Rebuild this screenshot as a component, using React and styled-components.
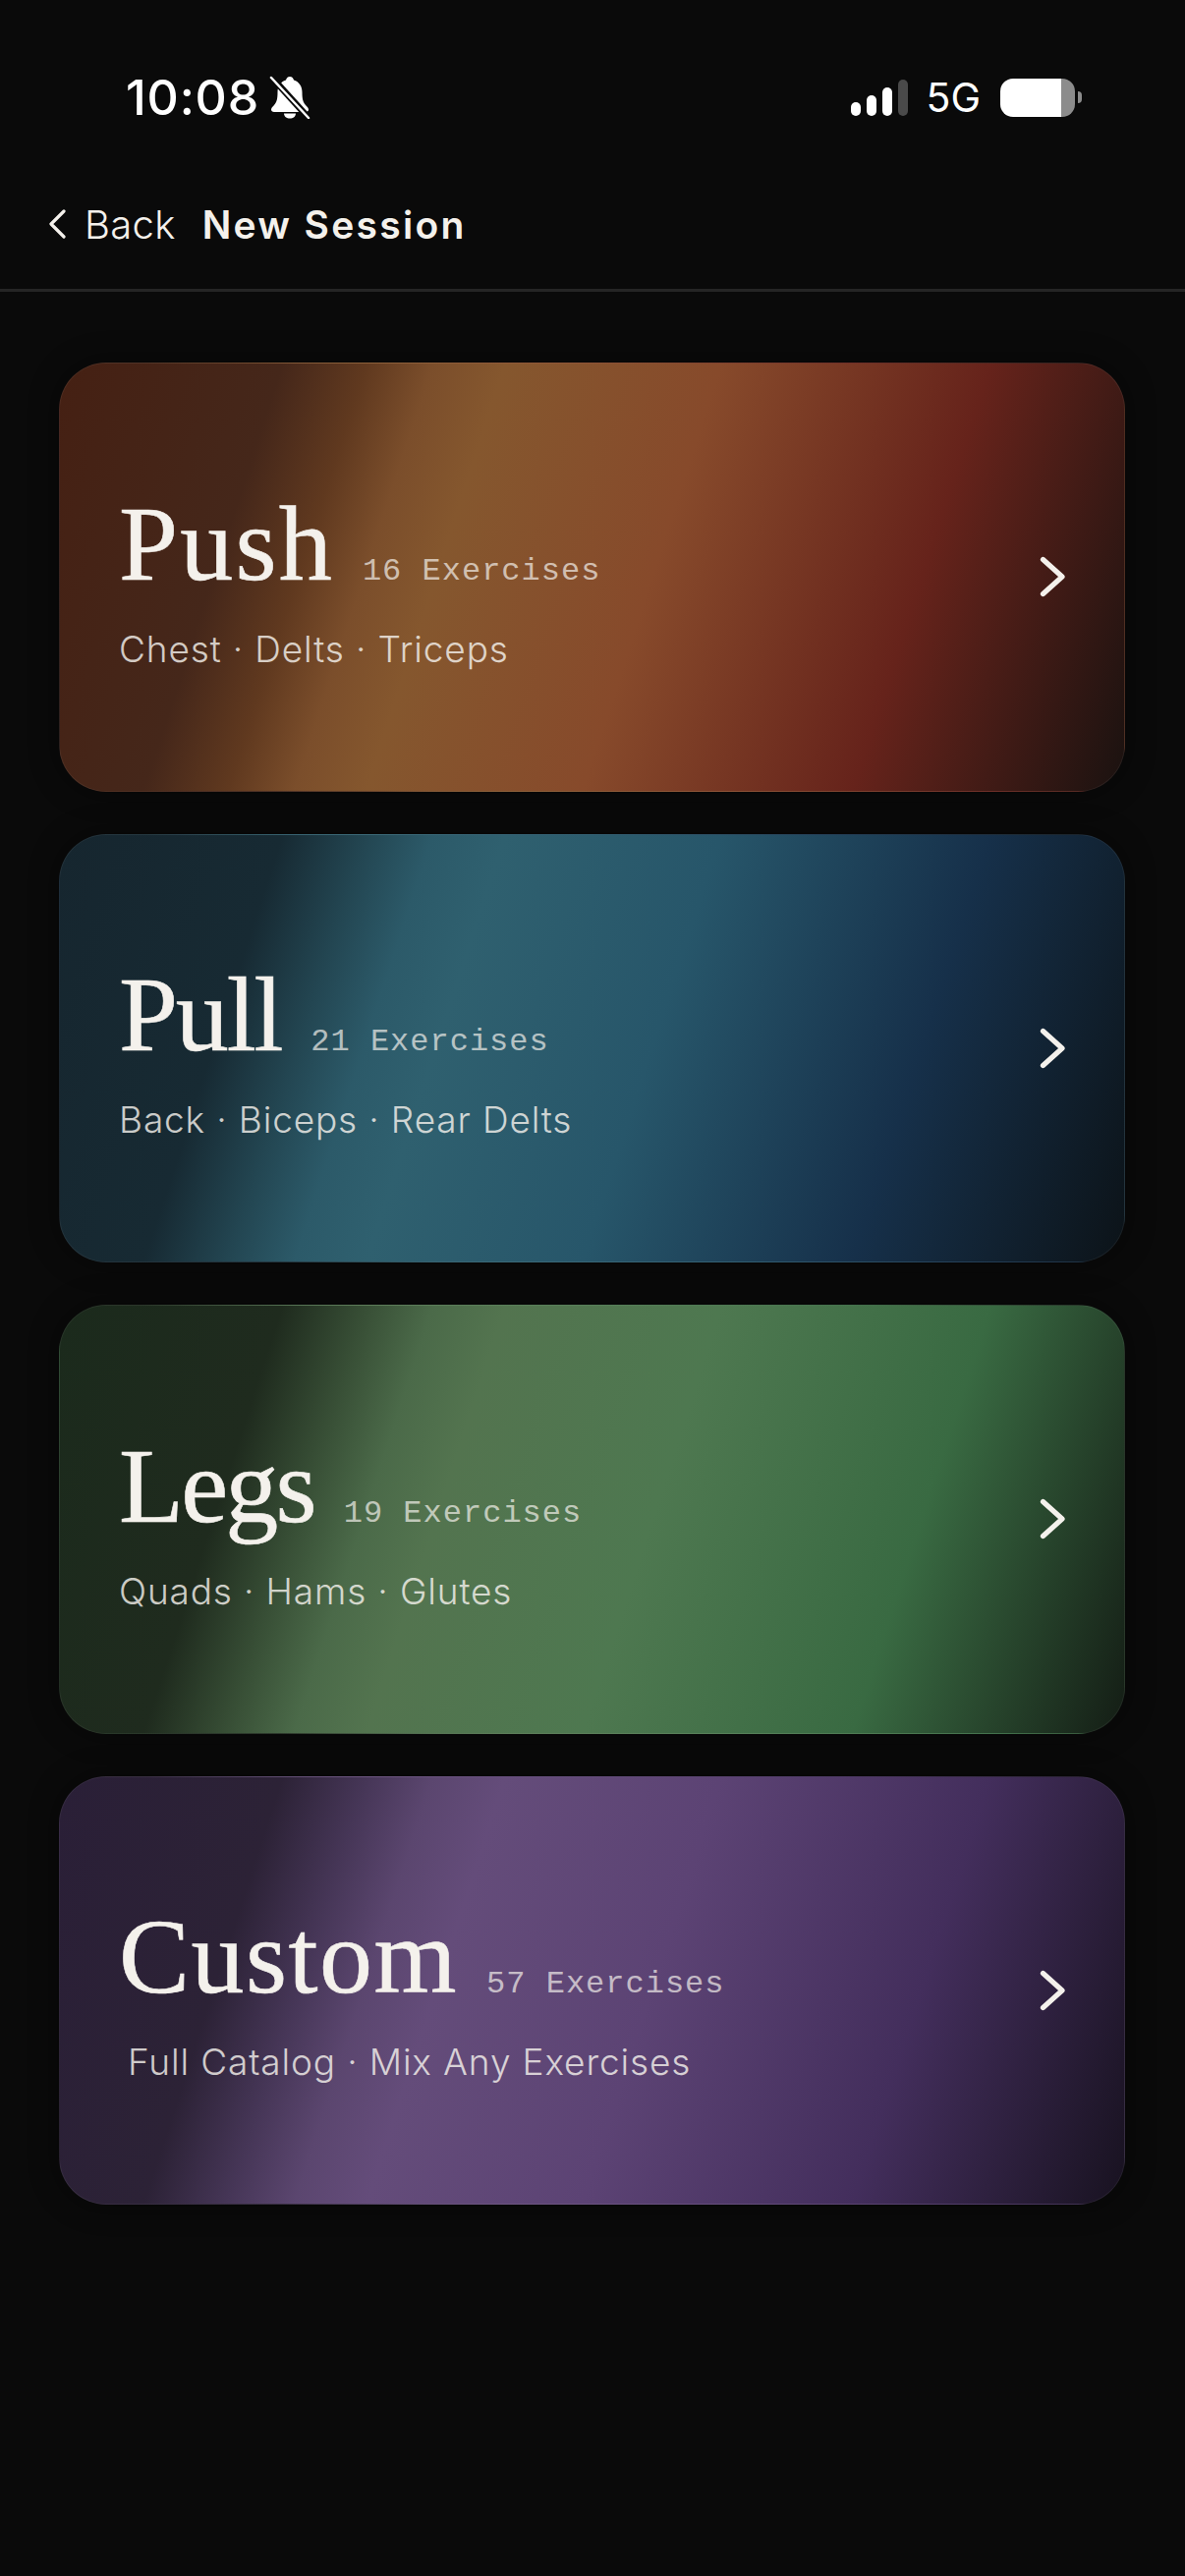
import React from "react";
import styled, { createGlobalStyle } from "styled-components";

const Global = createGlobalStyle`
  html, body { margin: 0; padding: 0; background: #0a0a0a; }
  * { box-sizing: border-box; }
`;
const Page = styled.div`
  width: 1206px; height: 2622px; background: #0a0a0a; color: #f4f1ec; overflow: hidden;
  font-family: Inter, "Liberation Sans", sans-serif;
`;
const StatusBar = styled.div`
  height: 198px; padding: 0 104px 0 128px; display: flex; align-items: center; justify-content: space-between; color: #fff;
`;
const StatusLeft = styled.div`display: flex; align-items: center; gap: 10px;`;
const Time = styled.span`font-size: 50px; font-weight: 500; letter-spacing: 0.8px; line-height: 1;`;
const StatusRight = styled.div`display: flex; align-items: center; gap: 0; transform: translateX(-1px);`;
const FiveG = styled.span`font-size: 41px; font-weight: 400; line-height: 1; margin: 0 20px 0 18px;`;
const Battery = styled.div`
  width: 76px; height: 39px; border-radius: 13px; overflow: hidden; background: linear-gradient(90deg, #fff 0 62px, #8c8c8c 62px);
`;
const Nub = styled.div`width: 4px; height: 12px; margin-left: 3px; background: #8c8c8c; border-radius: 0 6px 6px 0;`;
const Nav = styled.div`
  height: 99px; padding: 0 0 0 49px; display: flex; align-items: flex-start; border-bottom: 3px solid #252525;
`;
const NavRow = styled.div`display: flex; align-items: center; height: 60px;`;
const Back = styled.span`font-size: 40px; font-weight: 300; margin-left: 19px; letter-spacing: 0.3px;`;
const Title = styled.span`font-size: 39px; font-weight: 600; margin-left: 27px; letter-spacing: 2.3px;`;
const List = styled.div`display: flex; flex-direction: column; gap: 43px; padding: 72px 61px 0 60px;`;
const Card = styled.div`
  height: 436.5px; border-radius: 48px; padding: 0 60px; display: flex; align-items: center; justify-content: space-between;
  border: 1.5px solid rgba(255,255,255,0.06);
  box-shadow: 0 0 30px rgba(0,0,0,0.45);
  background: linear-gradient(108deg, ${p => p.$stops});
`;
const Info = styled.div`display: flex; flex-direction: column;`;
const Head = styled.div`display: flex; align-items: baseline; gap: ${p => p.$gap}px;`;
const Name = styled.span`
  font-family: "Liberation Serif", serif; font-size: 108px; line-height: 124px;
  letter-spacing: ${p => p.$track}px; color: #f4f1ec; -webkit-text-stroke: 0.6px #f4f1ec;
`;
const Count = styled.span`
  font-family: "Liberation Mono", monospace; font-size: 32px; letter-spacing: 1px; color: rgba(244,241,236,0.7);
`;
const Muscles = styled.span`
  font-size: 37px; font-weight: 350; letter-spacing: 0.85px; line-height: 44px; margin-top: 23px; margin-left: ${p => p.$indent || 0}px; color: rgba(244,241,236,0.82);
`;

const Bell = () => (
  <svg width="42" height="44" viewBox="0 0 42 44">
    <path d="M21 1c-2.2 0-3.6 1.6-4 3.6C11.500 6.400 8.500 11 8.500 17c0 6.500-.8 10-3.500 13-1.600 1.800-3 3-3 4.500 0 1.500 1.200 2.500 3 2.500h32c1.800 0 3-1 3-2.500 0-1.500-1.400-2.700-3-4.500-2.700-3-3.500-6.500-3.500-13 0-6-3-10.600-8.500-12.400C24.600 2.600 23.200 1 21 1z" fill="#fff" />
    <path d="M15 38.500h12c0 3-2.700 5-6 5s-6-2-6-5z" fill="#fff" />
    <path d="M2 1l38 42" stroke="#0a0a0a" strokeWidth="6.500" />
    <path d="M2 2l38 41" stroke="#fff" strokeWidth="2.500" strokeLinecap="round" />
  </svg>
);
const Signal = () => (
  <svg width="58" height="37" viewBox="0 0 58 37">
    <rect x="0" y="23" width="10" height="14" rx="5" fill="#fff" />
    <rect x="16" y="16" width="10" height="21" rx="5" fill="#fff" />
    <rect x="32" y="8" width="10" height="29" rx="5" fill="#fff" />
    <rect x="48" y="0" width="10" height="37" rx="5" fill="#4a4a4a" />
  </svg>
);
const BackChevron = () => (
  <svg width="18" height="30" viewBox="0 0 18 30" fill="none">
    <path d="M16 2 3 15l13 13" stroke="#f4f1ec" strokeWidth="3.200" strokeLinecap="round" strokeLinejoin="round" />
  </svg>
);
const CardChevron = () => (
  <svg width="26" height="42" viewBox="0 0 26 42" fill="none">
    <path d="M3.500 3.500 23 21 3.500 38.500" stroke="#f4f1ec" strokeWidth="5.200" strokeLinecap="round" strokeLinejoin="round" />
  </svg>
);

const ramp = (a, b, c, d, e, f, g, h) =>
  `${a} 0%, ${b} 18.500%, ${c} 25.500%, ${d} 31%, ${e} 37%, ${f} 55%, ${g} 77.400%, ${h} 100%`;

const cards = [
  { name: "Push", count: 16, muscles: "Chest · Delts · Triceps", track: 2.2, gap: 29,
    stops: ramp("#452013", "#45271a", "#60391f", "#7b4e2b", "#85572e", "#874a2b", "#66231b", "#1a1210") },
  { name: "Pull", count: 21, muscles: "Back · Biceps · Rear Delts", track: -2.2, gap: 30,
    stops: ramp("#16262f", "#172a33", "#234652", "#2c5a69", "#2f606f", "#27566a", "#16304a", "#0c1318") },
  { name: "Legs", count: 19, muscles: "Quads · Hams · Glutes", track: -2.8, gap: 30,
    stops: ramp("#1b2a1c", "#1f2b1e", "#384f36", "#4b6a49", "#53744f", "#4e7850", "#396a42", "#141d15") },
  { name: "Custom", count: 57, muscles: "Full Catalog · Mix Any Exercises", indent: 9, track: 1.5, gap: 29,
    stops: ramp("#2a1f37", "#2c2236", "#463657", "#5b466f", "#644c7a", "#5c4374", "#432e5c", "#181220") },
];

export default function App() {
  return (
    <Page>
      <Global />
      <StatusBar>
        <StatusLeft><Time>10:08</Time><Bell /></StatusLeft>
        <StatusRight><Signal /><FiveG>5G</FiveG><Battery /><Nub /></StatusRight>
      </StatusBar>
      <Nav>
        <NavRow><BackChevron /><Back>Back</Back><Title>New Session</Title></NavRow>
      </Nav>
      <List>
        {cards.map(c => (
          <Card key={c.name} $stops={c.stops}>
            <Info>
              <Head $gap={c.gap}><Name $track={c.track}>{c.name}</Name><Count>{c.count} Exercises</Count></Head>
              <Muscles $indent={c.indent}>{c.muscles}</Muscles>
            </Info>
            <CardChevron />
          </Card>
        ))}
      </List>
    </Page>
  );
}
